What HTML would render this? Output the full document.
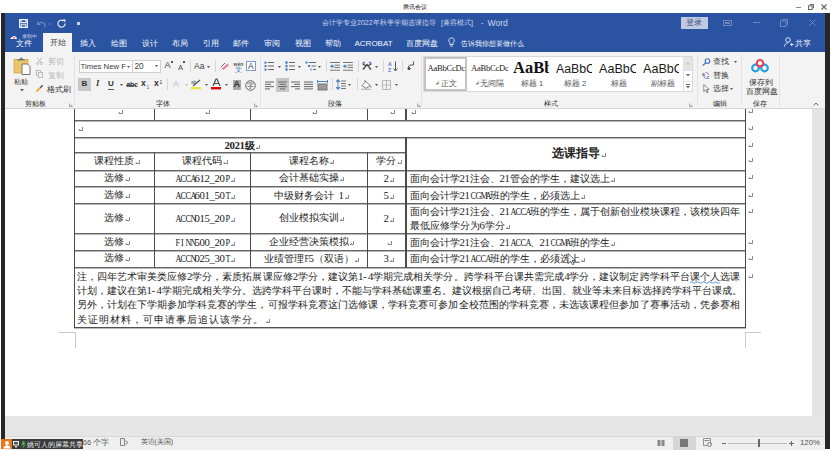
<!DOCTYPE html>
<html><head><meta charset="utf-8">
<style>
*{margin:0;padding:0;box-sizing:border-box}
html,body{width:831px;height:450px;overflow:hidden;background:#fff;font-family:"Liberation Sans",sans-serif;color:#444}
.a{position:absolute;white-space:nowrap}
#titlebar{position:absolute;left:5px;top:13px;width:820px;height:39px;background:#2a53a2}
#ribbon{position:absolute;left:5px;top:52px;width:820px;height:57px;background:#f3f3f3;border-bottom:1px solid #d6d6d6}
#doc{position:absolute;left:5px;top:109px;width:807px;height:307px;background:#fff}
#scroll{position:absolute;left:812px;top:109px;width:13px;height:307px;background:#e4e4e4}
#gray{position:absolute;left:5px;top:415.5px;width:820px;height:21px;background:#e6e6e6;border-bottom:1px solid #d8d8d8}
#status{position:absolute;left:5px;top:436.5px;width:820px;height:14px;background:#efefef}
.dk{position:absolute;top:13px;height:436px;background:#262626}
.tab{position:absolute;top:38px;font-size:8px;color:#f6f8fc;line-height:12px}
.hl{position:absolute;height:1px;background:#555}
.vl{position:absolute;width:1px;background:#555}
.d{position:absolute;white-space:nowrap;font-family:"Liberation Serif",serif;font-size:10px;color:#222;line-height:12px}
.h{display:inline-block;width:5px;text-align:center;font-family:"Liberation Serif",serif;font-size:10.8px}
.hc{transform:scaleX(0.76)}
.j{text-align:justify;text-align-last:justify;text-justify:inter-character}
.pm{display:inline-block;position:relative;width:5px;height:5px;margin-left:1px;vertical-align:-1px}
.pm::before{content:"";position:absolute;right:0.5px;top:0;width:3px;height:3px;border-right:1px solid #8a8a8a;border-bottom:1px solid #8a8a8a;border-bottom-right-radius:1.5px}
.pm::after{content:"";position:absolute;left:0;top:1.5px;width:0;height:0;border-top:1.5px solid transparent;border-bottom:1.5px solid transparent;border-right:2px solid #8a8a8a}
.rt{position:absolute;white-space:nowrap;font-size:7.6px;color:#444;line-height:9px}
.sep{position:absolute;top:55px;width:1px;height:51px;background:#e2e2e2}
.sep2{position:absolute;width:1px;height:12px;background:#d8d8d8}
.lbl{position:absolute;font-size:7.3px;color:#262626;top:99px;line-height:9px}
</style></head><body>
<!-- top bar -->
<div class="a" style="left:403px;top:3px;font-size:6px;color:#222;line-height:8px">腾讯会议</div>
<div class="a" style="left:795.5px;top:6.5px;width:5px;height:1px;background:#888"></div>
<svg class="a" style="left:808px;top:3.5px" width="6" height="6" viewBox="0 0 6 6"><rect x="0.5" y="1.8" width="3.7" height="3.7" fill="none" stroke="#666" stroke-width="1"/><path d="M1.8 0.5h3.7v3.7" fill="none" stroke="#666" stroke-width="1"/></svg>
<svg class="a" style="left:821px;top:3.5px" width="6" height="6" viewBox="0 0 6 6"><path d="M0.5 0.5l5 5M5.5 0.5l-5 5" stroke="#666" stroke-width="1.1"/></svg>

<div id="titlebar"></div>
<!-- QAT -->
<svg class="a" style="left:19px;top:19px" width="9" height="9" viewBox="0 0 9 9"><path d="M0.6 0.6h7.8v7.8h-7.8z M2 0.6v3h5v-3 M2.2 8.4v-2.6h4.6v2.6" fill="none" stroke="#f2f4fa" stroke-width="1.1"/></svg>
<svg class="a" style="left:36px;top:20px" width="16" height="8" viewBox="0 0 16 8"><path d="M1.5 1.5v3h3 M1.8 4.3c1.5-2.4 4.6-2.6 6.4-0.6c1 1.1 1 2.4 0.6 3.6" fill="none" stroke="#6f8ec8" stroke-width="1.2"/><path d="M12 3.5h3l-1.5 1.6z" fill="#6f8ec8"/></svg>
<svg class="a" style="left:57px;top:19px" width="9" height="9" viewBox="0 0 9 9"><path d="M6.6 1.9A3.5 3.5 0 1 0 8 4.5" fill="none" stroke="#f2f4fa" stroke-width="1.1"/><path d="M5.2 0.4h3.2v3.2z" fill="#f2f4fa"/></svg>
<div class="a" style="left:77px;top:22px;width:3px;height:3px;background:#c9d3ea"></div>
<div class="a" style="left:322px;top:18px;font-size:7px;color:#cdd6ee;line-height:10px">会计学专业2022年秋季学期选课指导</div>
<div class="a" style="left:441px;top:18px;font-size:7.3px;color:#cdd6ee;line-height:10px">[兼容模式]</div>
<div class="a" style="left:481px;top:18px;font-size:7.5px;color:#cdd6ee;line-height:10px">-</div>
<div class="a" style="left:487.5px;top:17.5px;font-size:8.6px;color:#cdd6ee;line-height:10px">Word</div>
<div class="a" style="left:680.5px;top:17px;width:27.5px;height:11.5px;background:#c0c9df"></div>
<div class="a" style="left:686px;top:18px;font-size:7.5px;color:#3b4f7c;line-height:10px">登录</div>
<svg class="a" style="left:723px;top:19.5px" width="9" height="6" viewBox="0 0 9 6"><rect x="0.5" y="0.5" width="8" height="5" fill="none" stroke="#7088bd" stroke-width="1"/><rect x="2" y="2" width="5" height="2" fill="#7088bd"/></svg>
<div class="a" style="left:752.5px;top:22px;width:7.5px;height:1px;background:#6f87bd"></div>
<svg class="a" style="left:779.5px;top:19px" width="8" height="8" viewBox="0 0 8 8"><rect x="0.5" y="2" width="5.5" height="5.5" fill="none" stroke="#7088bd" stroke-width="1"/><path d="M2 0.5h5.5v5.5" fill="none" stroke="#7088bd" stroke-width="1"/></svg>
<svg class="a" style="left:808.5px;top:19px" width="7" height="7" viewBox="0 0 7 7"><path d="M0.5 0.5l6 6M6.5 0.5l-6 6" stroke="#7088bd" stroke-width="1"/></svg>
<!-- tabs -->
<div class="a" style="left:43px;top:33px;width:29px;height:20px;background:#f3f3f3"></div>
<svg class="a" style="left:10px;top:35px" width="7" height="4" viewBox="0 0 7 4"><path d="M0.5 4c0-1.3 0.9-2 2-2c0.4-1.3 2.5-1.6 3.2-0.2c0.8 0.2 1.2 1.1 1.2 2.2z" fill="#fff"/><circle cx="4" cy="2.8" r="0.9" fill="#e33"/></svg>
<div class="a" style="left:22px;top:34px;font-size:4.5px;color:#d8def0;line-height:6px">录制中</div>
<div class="tab" style="left:16px;top:38px">文件</div>
<div class="tab" style="left:49.5px;top:37px;color:#444">开始</div>
<div class="tab" style="left:80px">插入</div>
<div class="tab" style="left:110.5px">绘图</div>
<div class="tab" style="left:141.5px">设计</div>
<div class="tab" style="left:172px">布局</div>
<div class="tab" style="left:202.5px">引用</div>
<div class="tab" style="left:233px">邮件</div>
<div class="tab" style="left:263.5px">审阅</div>
<div class="tab" style="left:294.5px">视图</div>
<div class="tab" style="left:325px">帮助</div>
<div class="tab" style="left:354.5px">ACROBAT</div>
<div class="tab" style="left:405.5px">百度网盘</div>
<svg class="a" style="left:448px;top:37px" width="7" height="11" viewBox="0 0 7 11"><path d="M3.5 0.8a2.7 2.7 0 0 0-1.6 4.9v1.8h3.2v-1.8a2.7 2.7 0 0 0-1.6-4.9z M2.2 9h2.6" fill="none" stroke="#e6ebf5" stroke-width="0.9"/></svg>
<div class="tab" style="left:461px;font-size:7.3px">告诉我你想要做什么</div>
<svg class="a" style="left:784px;top:37px" width="10" height="10" viewBox="0 0 10 10"><circle cx="4" cy="3" r="2.3" fill="none" stroke="#e6ebf5" stroke-width="0.9"/><path d="M0.5 9.5c0.3-2.5 1.6-3.6 3.5-3.6 M6 7.5h3.5 M7.75 5.8v3.4" fill="none" stroke="#e6ebf5" stroke-width="0.9"/></svg>
<div class="tab" style="left:795px">共享</div>
<div class="dk" style="left:1px;width:4px"></div>
<div class="dk" style="left:825px;width:5px"></div>

<div id="ribbon"></div>
<!-- clipboard group -->
<svg class="a" style="left:13px;top:56px" width="19" height="19" viewBox="0 0 19 19">
<rect x="1" y="3.5" width="14" height="13.5" fill="#e9c46a"/>
<rect x="1" y="3.5" width="14" height="13.5" fill="none" stroke="#d9a840" stroke-width="0.8"/>
<path d="M4.5 4.5v-1.6h2.2a1.5 1.5 0 0 1 3 0h2v1.6z" fill="#777"/>
<path d="M9 8h5.5l2.5 2.5v8h-8z" fill="#fff" stroke="#666" stroke-width="0.9"/>
</svg>
<div class="rt" style="left:14px;top:77px;font-size:7.3px;color:#333">粘贴</div>
<svg class="a" style="left:20px;top:89px" width="4" height="3" viewBox="0 0 4 3"><path d="M0 0h4l-2 2.5z" fill="#666"/></svg>
<svg class="a" style="left:36px;top:57px" width="7" height="8" viewBox="0 0 7 8"><path d="M1 0.5l4.5 5.5 M6 0.5l-4.5 5.5" stroke="#b4b4b4" stroke-width="0.9" fill="none"/><circle cx="1.5" cy="6.5" r="1.1" fill="none" stroke="#b4b4b4" stroke-width="0.8"/><circle cx="5.5" cy="6.5" r="1.1" fill="none" stroke="#b4b4b4" stroke-width="0.8"/></svg>
<div class="rt" style="left:47.5px;top:57px;color:#b8b8b8">剪切</div>
<svg class="a" style="left:36px;top:70px" width="7" height="8" viewBox="0 0 7 8"><rect x="0.5" y="0.5" width="4" height="5" fill="none" stroke="#b4b4b4" stroke-width="0.9"/><rect x="2.5" y="2.5" width="4" height="5" fill="#f3f3f3" stroke="#b4b4b4" stroke-width="0.9"/></svg>
<div class="rt" style="left:47.5px;top:70.5px;color:#b8b8b8">复制</div>
<svg class="a" style="left:36px;top:85px" width="7" height="7" viewBox="0 0 7 7"><path d="M0.5 6.5l3.5-3.5" stroke="#f0a020" stroke-width="1.6"/><path d="M4 3l2.5-2.5" stroke="#555" stroke-width="1.3"/><circle cx="6" cy="1" r="0.8" fill="#555"/></svg>
<div class="rt" style="left:47px;top:84.5px;color:#333">格式刷</div>
<div class="lbl" style="left:25px">剪贴板</div>
<svg class="a" style="left:68.5px;top:102.5px" width="4" height="4" viewBox="0 0 4 4"><path d="M0.5 0.5v3h3 M1.5 1.5l2 2" stroke="#888" stroke-width="0.7" fill="none"/></svg>
<div class="sep" style="left:73.5px"></div>
<!-- font group -->
<div class="a" style="left:78.5px;top:59.5px;width:54px;height:13px;background:#fff;border:1px solid #cfcfcf"></div>
<div class="a" style="left:131.5px;top:59.5px;width:29px;height:13px;background:#fff;border:1px solid #cfcfcf"></div>
<div class="rt" style="left:80.5px;top:62px;font-size:7.8px;color:#3a3a3a">Times New F</div>
<svg class="a" style="left:127px;top:65.5px" width="3" height="2" viewBox="0 0 3 2"><path d="M0 0h3l-1.5 2z" fill="#555"/></svg>
<div class="rt" style="left:134.5px;top:62px;font-size:8.2px;color:#3a3a3a">20</div>
<svg class="a" style="left:155px;top:65px" width="3" height="2" viewBox="0 0 3 2"><path d="M0 0h3l-1.5 2z" fill="#555"/></svg>
<div class="rt" style="left:164.5px;top:61px;font-size:9px;color:#444">A</div>
<div class="a" style="left:170.5px;top:61px;width:2px;height:2px;background:#555"></div>
<div class="rt" style="left:178px;top:62.5px;font-size:7.5px;color:#444">A</div>
<div class="a" style="left:183px;top:61px;width:2px;height:2px;background:#555"></div>
<div class="sep2" style="left:189.5px;top:60px"></div>
<div class="rt" style="left:194px;top:61.5px;font-size:8.5px;color:#444">Aa</div>
<svg class="a" style="left:206.5px;top:66px" width="3" height="2" viewBox="0 0 3 2"><path d="M0 0h3l-1.5 2z" fill="#555"/></svg>
<div class="sep2" style="left:214.5px;top:60px"></div>
<svg class="a" style="left:220px;top:61px" width="10" height="10" viewBox="0 0 10 10"><path d="M1 6 L5 2" stroke="#666" stroke-width="1"/><path d="M3.5 9l5.5-5-1.5-1.5-5.5 5z" fill="#e77aa0"/></svg>
<div class="rt" style="left:233.5px;top:59.5px;font-size:5px;color:#555;font-weight:bold">wén</div>
<div class="rt" style="left:235px;top:65px;font-size:6.5px;color:#3f77c0">文</div>
<div class="a" style="left:246px;top:61px;width:10px;height:10px;border:1px solid #7a9cd0;background:#fff"></div>
<div class="rt" style="left:248px;top:61.5px;font-size:8.5px;color:#333">A</div>
<div class="a" style="left:78px;top:78px;width:13px;height:13px;background:#c8c8c8"></div>
<div class="rt" style="left:81.5px;top:79px;font-size:8px;color:#333;font-weight:bold">B</div>
<div class="rt" style="left:96px;top:79px;font-size:8.5px;color:#333;font-style:italic;font-family:'Liberation Serif',serif;font-weight:bold">I</div>
<div class="rt" style="left:108px;top:78.5px;font-size:8px;color:#333;font-weight:bold">U</div>
<div class="a" style="left:108px;top:89px;width:6px;height:1px;background:#555"></div>
<svg class="a" style="left:119.5px;top:84px" width="3" height="2" viewBox="0 0 3 2"><path d="M0 0h3l-1.5 2z" fill="#555"/></svg>
<div class="rt" style="left:126.5px;top:79.5px;font-size:7px;color:#333;font-weight:bold;letter-spacing:-0.3px">abc</div>
<div class="a" style="left:126px;top:84.5px;width:10px;height:1px;background:#555"></div>
<div class="rt" style="left:141px;top:79px;font-size:8.5px;color:#333;font-weight:bold">x</div>
<div class="rt" style="left:146.5px;top:83px;font-size:5px;color:#3f77c0">1</div>
<div class="rt" style="left:154px;top:79px;font-size:8.5px;color:#333;font-weight:bold">x</div>
<div class="rt" style="left:159.5px;top:77.5px;font-size:5px;color:#333">1</div>
<div class="sep2" style="left:166.5px;top:78px"></div>
<div class="rt" style="left:172.5px;top:78.5px;font-size:9.5px;color:#d0d0d0;font-weight:bold">A</div>
<svg class="a" style="left:184.5px;top:84px" width="3" height="2" viewBox="0 0 3 2"><path d="M0 0h3l-1.5 2z" fill="#bbb"/></svg>
<svg class="a" style="left:191px;top:78px" width="11" height="12" viewBox="0 0 11 12"><path d="M2 8l7-6" stroke="#555" stroke-width="1.3"/><text x="0" y="6" font-size="5" fill="#555" font-family="Liberation Sans">ab</text><rect x="0" y="9" width="10" height="2.2" fill="#e8e830"/></svg>
<svg class="a" style="left:205px;top:84px" width="3" height="2" viewBox="0 0 3 2"><path d="M0 0h3l-1.5 2z" fill="#555"/></svg>
<svg class="a" style="left:211px;top:78px" width="11" height="12" viewBox="0 0 11 12"><path d="M2 8L5 1h1l3 7 M3.4 5.5h4.2" stroke="#444" stroke-width="1.1" fill="none"/><rect x="0" y="9" width="10" height="2.4" fill="#e00000"/></svg>
<svg class="a" style="left:225px;top:84px" width="3" height="2" viewBox="0 0 3 2"><path d="M0 0h3l-1.5 2z" fill="#555"/></svg>
<div class="a" style="left:232.5px;top:79.5px;width:8.5px;height:10px;background:#a8a8a8"></div>
<div class="rt" style="left:233.5px;top:79.5px;font-size:9px;color:#333;font-weight:bold">A</div>
<svg class="a" style="left:244.5px;top:79.5px" width="11" height="11" viewBox="0 0 11 11"><circle cx="5.5" cy="5.5" r="4.8" fill="none" stroke="#555" stroke-width="0.9"/><text x="2.3" y="8.2" font-size="6.5" fill="#444">字</text></svg>
<div class="lbl" style="left:155.5px">字体</div>
<svg class="a" style="left:254px;top:102.5px" width="4" height="4" viewBox="0 0 4 4"><path d="M0.5 0.5v3h3 M1.5 1.5l2 2" stroke="#888" stroke-width="0.7" fill="none"/></svg>
<div class="sep" style="left:259.5px"></div>
<svg class="a" style="left:264px;top:61px" width="10" height="10" viewBox="0 0 10 10"><rect x="0.5" y="0.6" width="2" height="2" fill="#3f77c0"/><rect x="4" y="1.0" width="6" height="1" fill="#666"/><rect x="0.5" y="4.1" width="2" height="2" fill="#3f77c0"/><rect x="4" y="4.5" width="6" height="1" fill="#666"/><rect x="0.5" y="7.6" width="2" height="2" fill="#3f77c0"/><rect x="4" y="8.0" width="6" height="1" fill="#666"/></svg><svg class="a" style="left:278px;top:66px" width="3" height="2" viewBox="0 0 3 2"><path d="M0 0h3l-1.5 2z" fill="#555"/></svg><svg class="a" style="left:284.5px;top:61px" width="10" height="10" viewBox="0 0 10 10"><rect x="0.5" y="0.30000000000000004" width="2" height="2.5" fill="#3f77c0"/><rect x="4" y="1.0" width="6" height="1" fill="#666"/><rect x="0.5" y="3.8" width="2" height="2.5" fill="#3f77c0"/><rect x="4" y="4.5" width="6" height="1" fill="#666"/><rect x="0.5" y="7.3" width="2" height="2.5" fill="#3f77c0"/><rect x="4" y="8.0" width="6" height="1" fill="#666"/></svg><svg class="a" style="left:298px;top:66px" width="3" height="2" viewBox="0 0 3 2"><path d="M0 0h3l-1.5 2z" fill="#555"/></svg><svg class="a" style="left:304.5px;top:61px" width="11" height="10" viewBox="0 0 11 10"><rect x="0.5" y="0.5" width="2" height="2" fill="#3f77c0"/><rect x="4" y="1" width="7" height="1" fill="#666"/><rect x="3" y="4" width="2" height="2" fill="#3f77c0"/><rect x="6.5" y="4.5" width="4.5" height="1" fill="#666"/><rect x="5.5" y="7.5" width="1" height="2" fill="#3f77c0"/><rect x="8" y="8" width="3" height="1" fill="#666"/></svg><svg class="a" style="left:317.5px;top:66px" width="3" height="2" viewBox="0 0 3 2"><path d="M0 0h3l-1.5 2z" fill="#555"/></svg><div class="sep2" style="left:325.5px;top:60px"></div><svg class="a" style="left:330px;top:61.5px" width="10" height="9" viewBox="0 0 10 9"><rect x="0" y="0" width="10" height="1" fill="#777"/><rect x="4.5" y="2.7" width="5.5" height="1" fill="#777"/><rect x="4.5" y="5" width="5.5" height="1" fill="#777"/><rect x="0" y="7.7" width="10" height="1" fill="#777"/><path d="M0 4.3l2.5-2v1.5h1.8v1h-1.8v1.5z" fill="#3f77c0"/></svg><svg class="a" style="left:343px;top:61.5px" width="10" height="9" viewBox="0 0 10 9"><rect x="0" y="0" width="10" height="1" fill="#777"/><rect x="4.5" y="2.7" width="5.5" height="1" fill="#777"/><rect x="4.5" y="5" width="5.5" height="1" fill="#777"/><rect x="0" y="7.7" width="10" height="1" fill="#777"/><path d="M4 4.3l-2.5-2v1.5h-1.5v1h1.5v1.5z" fill="#3f77c0"/></svg><div class="sep2" style="left:357.5px;top:60px"></div><svg class="a" style="left:361.5px;top:61px" width="10" height="9" viewBox="0 0 10 9"><path d="M1 8.5L5 3.5L9 8.5 M0.5 2.5l3.5 2.5 M9.5 2.5l-3.5 2.5" stroke="#444" stroke-width="1.3" fill="none"/><circle cx="2" cy="1.5" r="1" fill="#3f77c0"/><circle cx="8" cy="1.5" r="1" fill="#3f77c0"/></svg><svg class="a" style="left:374.5px;top:66px" width="3" height="2" viewBox="0 0 3 2"><path d="M0 0h3l-1.5 2z" fill="#555"/></svg><div class="sep2" style="left:382.5px;top:60px"></div><svg class="a" style="left:388px;top:60.5px" width="10" height="11" viewBox="0 0 10 11"><text x="0" y="5" font-size="5.2" fill="#3f77c0" font-family="Liberation Sans" font-weight="bold">A</text><text x="0" y="10.5" font-size="5.2" fill="#3f77c0" font-family="Liberation Sans" font-weight="bold">Z</text><path d="M7.5 0.5v9 M5.5 7.5l2 2.5 2-2.5" stroke="#555" stroke-width="1" fill="none"/></svg><div class="sep2" style="left:401.5px;top:60px"></div><svg class="a" style="left:407px;top:61px" width="8" height="10" viewBox="0 0 8 10"><path d="M6.5 0.5v3.5h-3.5 M3 4l-2 2" stroke="#555" stroke-width="1" fill="none"/><circle cx="2" cy="7.5" r="1.5" fill="#444"/></svg><svg class="a" style="left:264.5px;top:80.5px" width="10" height="9" viewBox="0 0 10 9"><rect x="0" y="0.5" width="9" height="1" fill="#666"/><rect x="0" y="2.8" width="6" height="1" fill="#666"/><rect x="0" y="5.1" width="9" height="1" fill="#666"/><rect x="0" y="7.3999999999999995" width="5" height="1" fill="#666"/></svg><div class="a" style="left:275.5px;top:78px;width:13.5px;height:13.5px;background:#c6c6c6"></div><svg class="a" style="left:277.5px;top:80.5px" width="10" height="9" viewBox="0 0 10 9"><rect x="0" y="0.5" width="9" height="1" fill="#666"/><rect x="1.5" y="2.8" width="6" height="1" fill="#666"/><rect x="0" y="5.1" width="9" height="1" fill="#666"/><rect x="2" y="7.3999999999999995" width="5" height="1" fill="#666"/></svg><svg class="a" style="left:290.5px;top:80.5px" width="10" height="9" viewBox="0 0 10 9"><rect x="0" y="0.5" width="9" height="1" fill="#666"/><rect x="3" y="2.8" width="6" height="1" fill="#666"/><rect x="0" y="5.1" width="9" height="1" fill="#666"/><rect x="4" y="7.3999999999999995" width="5" height="1" fill="#666"/></svg><svg class="a" style="left:303.5px;top:80.5px" width="10" height="9" viewBox="0 0 10 9"><rect x="0" y="0.5" width="9" height="1" fill="#666"/><rect x="0" y="2.8" width="9" height="1" fill="#666"/><rect x="0" y="5.1" width="9" height="1" fill="#666"/><rect x="0" y="7.3999999999999995" width="9" height="1" fill="#666"/></svg><svg class="a" style="left:316.5px;top:79.5px" width="11" height="11" viewBox="0 0 11 11"><path d="M0.5 0v3 M10.5 0v3 M0.5 1.5h10" stroke="#3f77c0" stroke-width="0.9" fill="none"/><rect x="0.5" y="3.5" width="10" height="7" fill="#777"/><rect x="1.5" y="4.5" width="8" height="5" fill="#999"/></svg><div class="sep2" style="left:331.5px;top:78px"></div><svg class="a" style="left:335.5px;top:79px" width="10" height="11" viewBox="0 0 10 11"><path d="M2 0.5l-1.8 2h3.6z M2 10.5l-1.8-2h3.6z M2 2v6.5" fill="#3f77c0" stroke="#3f77c0" stroke-width="0.8"/><rect x="5" y="1.5" width="5" height="1" fill="#777"/><rect x="5" y="4" width="5" height="1" fill="#777"/><rect x="5" y="6.5" width="5" height="1" fill="#777"/><rect x="5" y="9" width="5" height="1" fill="#777"/></svg><svg class="a" style="left:348px;top:84px" width="3" height="2" viewBox="0 0 3 2"><path d="M0 0h3l-1.5 2z" fill="#555"/></svg><div class="sep2" style="left:357px;top:78px"></div><svg class="a" style="left:361px;top:79px" width="11" height="11" viewBox="0 0 11 11"><path d="M1 6.5l4-4 4 4-4 3z" fill="#fff" stroke="#666" stroke-width="0.9"/><path d="M3 1.5l2 1" stroke="#666" stroke-width="0.9"/><path d="M9 6.5c0.8 1 1.2 1.8 0.6 2.3" stroke="#3f77c0" stroke-width="1" fill="none"/><rect x="0" y="9.8" width="10" height="1.2" fill="#bbb"/></svg><svg class="a" style="left:374.5px;top:84px" width="3" height="2" viewBox="0 0 3 2"><path d="M0 0h3l-1.5 2z" fill="#555"/></svg><svg class="a" style="left:382px;top:79.5px" width="9" height="10" viewBox="0 0 9 10"><path d="M0.5 0.5h8v9h-8z M4.5 0.5v9 M0.5 5h8" stroke="#aaa" stroke-width="0.8" fill="none"/></svg><svg class="a" style="left:395px;top:84px" width="3" height="2" viewBox="0 0 3 2"><path d="M0 0h3l-1.5 2z" fill="#555"/></svg><div class="lbl" style="left:328px">段落</div><svg class="a" style="left:416.5px;top:102.5px" width="4" height="4" viewBox="0 0 4 4"><path d="M0.5 0.5v3h3 M1.5 1.5l2 2" stroke="#888" stroke-width="0.7" fill="none"/></svg><div class="sep" style="left:421px"></div>

<!-- styles gallery -->
<div class="a" style="left:422.5px;top:56px;width:270px;height:36px;background:#fff;border:1px solid #d8d8d8"></div>
<div class="a" style="left:423.5px;top:57px;width:43px;height:34px;border:2px solid #c4c4c4"></div>
<div class="rt" style="left:427.5px;top:63.5px;font-family:'Liberation Serif',serif;font-size:8.6px;color:#222;letter-spacing:-0.25px">AaBbCcDc</div>
<div class="rt" style="left:434.5px;top:79px;font-size:6px;color:#555">↲</div>
<div class="rt" style="left:441px;top:79px;color:#555">正文</div>
<div class="rt" style="left:471px;top:63.5px;font-family:'Liberation Serif',serif;font-size:8.6px;color:#222;letter-spacing:-0.25px">AaBbCcDc</div>
<div class="rt" style="left:474.5px;top:79px;font-size:6px;color:#555">↲</div>
<div class="rt" style="left:480px;top:79px;color:#555">无间隔</div>
<div class="a" style="left:513px;top:58px;width:35.5px;height:20px;overflow:hidden"><div class="rt" style="left:0;top:0;font-family:'Liberation Serif',serif;font-size:16.5px;font-weight:bold;color:#111;line-height:20px">AaBb</div></div>
<div class="rt" style="left:521px;top:79px;color:#555">标题 1</div>
<div class="a" style="left:556px;top:61px;width:36px;height:16px;overflow:hidden"><div class="rt" style="left:0;top:0;font-size:12.3px;color:#1a1a1a;line-height:16px">AaBbC</div></div>
<div class="rt" style="left:564px;top:79px;color:#555">标题 2</div>
<div class="a" style="left:599px;top:60.5px;width:36.5px;height:16px;overflow:hidden"><div class="rt" style="left:0;top:0;font-size:12.6px;color:#1a1a1a;line-height:16px">AaBbC</div></div>
<div class="rt" style="left:611px;top:79px;color:#555">标题</div>
<div class="a" style="left:643px;top:60.5px;width:36px;height:16px;overflow:hidden"><div class="rt" style="left:0;top:0;font-size:12.6px;color:#1a1a1a;line-height:16px">AaBbC</div></div>
<div class="rt" style="left:650.5px;top:79px;color:#555">副标题</div>
<div class="a" style="left:682.5px;top:57px;width:1px;height:34px;background:#e0e0e0"></div>
<div class="a" style="left:683.5px;top:57px;width:8.5px;height:12.5px;background:#e4e4e4"></div>
<svg class="a" style="left:686px;top:62px" width="4" height="3" viewBox="0 0 4 3"><path d="M0 2.5h4l-2-2.5z" fill="#c0c0c0"/></svg>
<div class="a" style="left:683.5px;top:69.5px;width:8.5px;height:1px;background:#e0e0e0"></div>
<svg class="a" style="left:686px;top:74px" width="4" height="3" viewBox="0 0 4 3"><path d="M0 0h4l-2 2.5z" fill="#666"/></svg>
<div class="a" style="left:683.5px;top:80.5px;width:8.5px;height:1px;background:#e0e0e0"></div>
<div class="a" style="left:686px;top:84px;width:4px;height:1px;background:#666"></div>
<svg class="a" style="left:686px;top:86px" width="4" height="3" viewBox="0 0 4 3"><path d="M0 0h4l-2 2.5z" fill="#666"/></svg>
<div class="lbl" style="left:544px">样式</div>
<svg class="a" style="left:688.5px;top:102.5px" width="4" height="4" viewBox="0 0 4 4"><path d="M0.5 0.5v3h3 M1.5 1.5l2 2" stroke="#888" stroke-width="0.7" fill="none"/></svg>
<div class="sep" style="left:696.5px"></div>
<!-- editing -->
<svg class="a" style="left:702px;top:57.5px" width="9" height="8" viewBox="0 0 9 8"><circle cx="5.5" cy="3" r="2.3" fill="none" stroke="#3f77c0" stroke-width="1.1"/><path d="M3.8 4.7L0.8 7.5" stroke="#3f77c0" stroke-width="1.4"/></svg>
<div class="rt" style="left:712.5px;top:57px;color:#333">查找</div>
<svg class="a" style="left:733.5px;top:61px" width="3" height="2" viewBox="0 0 3 2"><path d="M0 0h3l-1.5 2z" fill="#555"/></svg>
<svg class="a" style="left:702px;top:71px" width="10" height="8" viewBox="0 0 10 8"><text x="0" y="4.5" font-size="5" fill="#666" font-family="Liberation Sans" font-weight="bold">a</text><text x="4.5" y="8" font-size="5" fill="#3f77c0" font-family="Liberation Sans" font-weight="bold">c</text><path d="M3.5 1.5c2 0 3 1 3 2.5 M2 5c0 1.5 1 2.5 2.5 2.5" stroke="#9b59b6" stroke-width="0.8" fill="none"/></svg>
<div class="rt" style="left:712.5px;top:70.5px;color:#333">替换</div>
<svg class="a" style="left:703px;top:84px" width="7" height="9" viewBox="0 0 7 9"><path d="M0.8 0.5v7l1.8-1.6 1.4 3 1.1-0.5-1.4-2.9h2.5z" fill="#fff" stroke="#666" stroke-width="0.8"/></svg>
<div class="rt" style="left:712.5px;top:84px;color:#333">选择</div>
<svg class="a" style="left:730px;top:88px" width="3" height="2" viewBox="0 0 3 2"><path d="M0 0h3l-1.5 2z" fill="#555"/></svg>
<div class="lbl" style="left:712.5px">编辑</div>
<div class="sep" style="left:741px"></div>
<!-- save -->
<svg class="a" style="left:751px;top:58.5px" width="18" height="14" viewBox="0 0 18 14"><circle cx="4.5" cy="9" r="3.3" fill="none" stroke="#1fa0e0" stroke-width="2.2"/><circle cx="13.5" cy="9" r="3.3" fill="none" stroke="#1fa0e0" stroke-width="2.2"/><circle cx="9" cy="4.2" r="3.2" fill="none" stroke="#e8455a" stroke-width="2.2"/><circle cx="9" cy="4.2" r="1.3" fill="#fff"/></svg>
<div class="rt" style="left:748.5px;top:77.5px;color:#333">保存到</div>
<div class="rt" style="left:745.5px;top:86.5px;color:#333">百度网盘</div>
<div class="lbl" style="left:752.5px">保存</div>
<div class="sep" style="left:778.5px"></div>
<svg class="a" style="left:813px;top:102px" width="6" height="4" viewBox="0 0 6 4"><path d="M0.5 3.5L3 1l2.5 2.5" stroke="#666" stroke-width="1" fill="none"/></svg>
<div id="doc"></div>
<!--DOC-->
<div class="a" style="left:74px;top:120px;width:672px;height:1px;background:#656565;box-shadow:0 1px 0 #b8b8b8"></div>
<div class="a" style="left:74px;top:137px;width:672px;height:1px;background:#656565;box-shadow:0 1px 0 #b8b8b8"></div>
<div class="a" style="left:74px;top:152px;width:331px;height:1px;background:#656565;box-shadow:0 1px 0 #b8b8b8"></div>
<div class="a" style="left:74px;top:170px;width:672px;height:1px;background:#656565;box-shadow:0 1px 0 #b8b8b8"></div>
<div class="a" style="left:74px;top:186px;width:672px;height:1px;background:#656565;box-shadow:0 1px 0 #b8b8b8"></div>
<div class="a" style="left:74px;top:203px;width:672px;height:1px;background:#656565;box-shadow:0 1px 0 #b8b8b8"></div>
<div class="a" style="left:74px;top:233px;width:672px;height:1px;background:#656565;box-shadow:0 1px 0 #b8b8b8"></div>
<div class="a" style="left:74px;top:250px;width:672px;height:1px;background:#656565;box-shadow:0 1px 0 #b8b8b8"></div>
<div class="a" style="left:74px;top:267px;width:672px;height:1px;background:#656565;box-shadow:0 1px 0 #b8b8b8"></div>
<div class="a" style="left:74px;top:327px;width:672px;height:1px;background:#505050;box-shadow:0 1px 0 #b8b8b8"></div>
<div class="a" style="left:74px;top:109px;width:1px;height:219px;background:#4a4a4a"></div>
<div class="a" style="left:745px;top:109px;width:1px;height:219px;background:#4a4a4a"></div>
<div class="a" style="left:154px;top:109px;width:1px;height:11px;background:#4a4a4a"></div>
<div class="a" style="left:154px;top:152px;width:1px;height:116px;background:#4a4a4a"></div>
<div class="a" style="left:250px;top:109px;width:1px;height:11px;background:#4a4a4a"></div>
<div class="a" style="left:250px;top:152px;width:1px;height:116px;background:#4a4a4a"></div>
<div class="a" style="left:367px;top:109px;width:1px;height:11px;background:#4a4a4a"></div>
<div class="a" style="left:367px;top:152px;width:1px;height:116px;background:#4a4a4a"></div>
<div class="a" style="left:405px;top:109px;width:2px;height:11px;background:#4a4a4a"></div>
<div class="a" style="left:405px;top:137px;width:2px;height:131px;background:#4a4a4a"></div>
<span class="pm" style="position:absolute;left:117px;top:110px"></span>
<span class="pm" style="position:absolute;left:204px;top:110px"></span>
<span class="pm" style="position:absolute;left:311px;top:110px"></span>
<span class="pm" style="position:absolute;left:389px;top:110px"></span>
<span class="pm" style="position:absolute;left:410px;top:110px"></span>
<span class="pm" style="position:absolute;left:77px;top:127px"></span>
<div class="d" style="left:77px;top:139px;width:331px;text-align:center;font-weight:bold;"><span class="h">2</span><span class="h">0</span><span class="h">2</span><span class="h">1</span>级<span class="pm"></span></div>
<div class="d" style="left:410px;top:147px;width:338px;text-align:center;font-weight:bold;font-size:12px;">选课指导<span class="pm"></span></div>
<div class="d" style="left:77px;top:155px;width:80px;text-align:center;">课程性质<span class="pm"></span></div>
<div class="d" style="left:157px;top:155px;width:96px;text-align:center;">课程代码<span class="pm"></span></div>
<div class="d" style="left:253px;top:155px;width:117px;text-align:center;">课程名称<span class="pm"></span></div>
<div class="d" style="left:370px;top:155px;width:38px;text-align:center;">学分<span class="pm"></span></div>
<div class="d" style="left:77px;top:172px;width:80px;text-align:center;">选修<span class="pm"></span></div>
<div class="d" style="left:157px;top:172px;width:96px;text-align:center;"><span class="h hc">A</span><span class="h hc">C</span><span class="h hc">C</span><span class="h hc">A</span><span class="h">6</span><span class="h">1</span><span class="h">2</span><span class="h">_</span><span class="h">2</span><span class="h">0</span><span class="h hc">P</span><span class="pm"></span></div>
<div class="d" style="left:253px;top:172px;width:117px;text-align:center;">会计基础实操<span class="pm"></span></div>
<div class="d" style="left:370px;top:172px;width:38px;text-align:center;"><span class="h">2</span><span class="pm"></span></div>
<div class="d" style="left:409.5px;top:172px;">面向会计学<span class="h">2</span><span class="h">1</span>注会、<span class="h">2</span><span class="h">1</span>管会的学生，建议选上<span class="pm"></span></div>
<div class="d" style="left:77px;top:189px;width:80px;text-align:center;">选修<span class="pm"></span></div>
<div class="d" style="left:157px;top:189px;width:96px;text-align:center;"><span class="h hc">A</span><span class="h hc">C</span><span class="h hc">C</span><span class="h hc">A</span><span class="h">6</span><span class="h">0</span><span class="h">1</span><span class="h">_</span><span class="h">5</span><span class="h">0</span><span class="h hc">T</span><span class="pm"></span></div>
<div class="d" style="left:253px;top:189px;width:117px;text-align:center;">中级财务会计<span class="h"> </span><span class="h">1</span><span class="pm"></span></div>
<div class="d" style="left:370px;top:189px;width:38px;text-align:center;"><span class="h">5</span><span class="pm"></span></div>
<div class="d" style="left:409.5px;top:189px;">面向会计学<span class="h">2</span><span class="h">1</span><span class="h hc">C</span><span class="h hc">G</span><span class="h hc">M</span><span class="h hc">A</span>班的学生，必须选上<span class="pm"></span></div>
<div class="d" style="left:77px;top:212px;width:80px;text-align:center;">选修<span class="pm"></span></div>
<div class="d" style="left:157px;top:212px;width:96px;text-align:center;"><span class="h hc">A</span><span class="h hc">C</span><span class="h hc">C</span><span class="h hc">N</span><span class="h">0</span><span class="h">1</span><span class="h">5</span><span class="h">_</span><span class="h">2</span><span class="h">0</span><span class="h hc">P</span><span class="pm"></span></div>
<div class="d" style="left:253px;top:212px;width:117px;text-align:center;">创业模拟实训<span class="pm"></span></div>
<div class="d" style="left:370px;top:212px;width:38px;text-align:center;"><span class="h">2</span><span class="pm"></span></div>
<div class="d" style="left:409.5px;top:205px;">面向会计学<span class="h">2</span><span class="h">1</span>注会、<span class="h">2</span><span class="h">1</span><span class="h hc">A</span><span class="h hc">C</span><span class="h hc">C</span><span class="h hc">A</span>班的学生，属于创新创业模块课程，该模块四年</div>
<div class="d" style="left:409.5px;top:219px;">最低应修学分为<span class="h">6</span>学分<span class="pm"></span></div>
<div class="d" style="left:77px;top:236px;width:80px;text-align:center;">选修<span class="pm"></span></div>
<div class="d" style="left:157px;top:236px;width:96px;text-align:center;"><span class="h hc">F</span><span class="h hc">I</span><span class="h hc">N</span><span class="h hc">N</span><span class="h">5</span><span class="h">0</span><span class="h">0</span><span class="h">_</span><span class="h">2</span><span class="h">0</span><span class="h hc">P</span><span class="pm"></span></div>
<div class="d" style="left:253px;top:236px;width:117px;text-align:center;">企业经营决策模拟<span class="pm"></span></div>
<div class="d" style="left:370px;top:236px;width:38px;text-align:center;"><span class="pm"></span></div>
<div class="d" style="left:409.5px;top:236px;">面向会计学<span class="h">2</span><span class="h">1</span>注会、<span class="h">2</span><span class="h">1</span><span class="h hc">A</span><span class="h hc">C</span><span class="h hc">C</span><span class="h hc">A</span>、<span class="h">2</span><span class="h">1</span><span class="h hc">C</span><span class="h hc">G</span><span class="h hc">M</span><span class="h hc">A</span>班的学生<span class="pm"></span></div>
<div class="d" style="left:77px;top:252px;width:80px;text-align:center;">选修<span class="pm"></span></div>
<div class="d" style="left:157px;top:252px;width:96px;text-align:center;"><span class="h hc">A</span><span class="h hc">C</span><span class="h hc">C</span><span class="h hc">N</span><span class="h">0</span><span class="h">2</span><span class="h">5</span><span class="h">_</span><span class="h">3</span><span class="h">0</span><span class="h hc">T</span><span class="pm"></span></div>
<div class="d" style="left:253px;top:252px;width:117px;text-align:center;">业绩管理<span class="h hc">F</span><span class="h">5</span>（双语）<span class="pm"></span></div>
<div class="d" style="left:370px;top:252px;width:38px;text-align:center;"><span class="h">3</span><span class="pm"></span></div>
<div class="d" style="left:409.5px;top:252px;">面向会计学<span class="h">2</span><span class="h">1</span><span class="h hc">A</span><span class="h hc">C</span><span class="h hc">C</span><span class="h hc">A</span>班的学生，必须选上<span class="pm"></span></div>
<div class="d j" style="left:76.5px;top:269.5px;width:663.5px">注，四年艺术审美类应修<span class="h">2</span>学分，素质拓展课应修<span class="h">2</span>学分，建议第<span class="h">1</span><span class="h">-</span><span class="h">4</span>学期完成相关学分。跨学科平台课共需完成<span class="h">4</span>学分，建议制定跨学科平台课个人选课</div>
<div class="d j" style="left:76.5px;top:284px;width:663.5px">计划，建议在第<span class="h">1</span><span class="h">-</span><span class="h">4</span>学期完成相关学分。选跨学科平台课时，不能与学科基础课重名。建议根据自己考研、出国、就业等未来目标选择跨学科平台课成。</div>
<div class="d j" style="left:76.5px;top:298.5px;width:663.5px">另外，计划在下学期参加学科竞赛的学生，可报学科竞赛这门选修课，学科竞赛可参加全校范围的学科竞赛，未选该课程但参加了赛事活动，凭参赛相</div>
<div class="d" style="left:76.5px;top:314px;letter-spacing:1.06px;">关证明材料，可申请事后追认该学分。<span class="pm"></span></div>
<span class="pm" style="position:absolute;left:747px;top:109px"></span>
<span class="pm" style="position:absolute;left:747px;top:126px"></span>
<span class="pm" style="position:absolute;left:747px;top:143px"></span>
<span class="pm" style="position:absolute;left:747px;top:158px"></span>
<span class="pm" style="position:absolute;left:747px;top:175px"></span>
<span class="pm" style="position:absolute;left:747px;top:193px"></span>
<span class="pm" style="position:absolute;left:747px;top:209px"></span>
<span class="pm" style="position:absolute;left:747px;top:240px"></span>
<span class="pm" style="position:absolute;left:747px;top:256px"></span>
<span class="pm" style="position:absolute;left:747px;top:274px"></span>
<svg class="a" style="left:690px;top:281px" width="31" height="3" viewBox="0 0 31 3"><path d="M0 1.5q1.5-1.5 3 0t3 0 3 0 3 0 3 0 3 0 3 0 3 0 3 0 3 0" stroke="#3f77c0" stroke-width="0.8" fill="none"/></svg>
<div class="a" style="left:58px;top:332px;width:18px;height:1px;background:#c8c8c8"></div>
<div class="a" style="left:75px;top:332px;width:1px;height:16px;background:#c8c8c8"></div>
<div class="a" style="left:745px;top:332px;width:16px;height:1px;background:#c8c8c8"></div>
<div class="a" style="left:745px;top:332px;width:1px;height:16px;background:#c8c8c8"></div>
<svg class="a" style="left:567px;top:253px" width="10" height="12" viewBox="0 0 10 12"><path d="M1 0.5v10l2.5-2.3 2 3.5 1.5-0.8-2-3.4h3.5z" fill="#fff" stroke="#444" stroke-width="0.8"/></svg>
<!--/DOC-->
<div id="scroll"></div>
<div id="gray"></div>
<div id="status"></div>
<div class="rt" style="left:78.5px;top:437.5px;font-size:7.6px;color:#555">566 个字</div>
<svg class="a" style="left:120px;top:438px" width="9" height="8" viewBox="0 0 9 8"><path d="M0.5 0.5h4v7h-4z" fill="none" stroke="#777" stroke-width="0.9"/><path d="M5.5 2.5l2.5 2-2.5 2" fill="none" stroke="#777" stroke-width="0.9"/></svg>
<div class="rt" style="left:140.5px;top:437.5px;font-size:7.1px;color:#555">英语(美国)</div>
<svg class="a" style="left:657px;top:438.5px" width="8" height="8" viewBox="0 0 8 8"><path d="M0.5 1h3v6h-3z M4.5 1h3v6h-3z" fill="#888"/></svg>
<div class="a" style="left:673px;top:436px;width:23px;height:14px;background:#d6d6d6"></div>
<div class="a" style="left:680px;top:438.5px;width:8px;height:8px;background:#777"></div>
<svg class="a" style="left:703px;top:438px" width="9" height="9" viewBox="0 0 9 9"><path d="M0.5 0.5h7v6" fill="none" stroke="#888" stroke-width="0.9"/><path d="M0.5 0.5v7h4" fill="none" stroke="#888" stroke-width="0.9"/><circle cx="6.5" cy="6.5" r="2" fill="none" stroke="#777" stroke-width="0.9"/><rect x="1.5" y="2" width="5" height="1" fill="#888"/></svg>
<div class="a" style="left:721.5px;top:442.5px;width:4px;height:1px;background:#666"></div>
<div class="a" style="left:728px;top:442.5px;width:59px;height:1px;background:#bdbdbd"></div>
<div class="a" style="left:757.5px;top:439px;width:2px;height:8px;background:#666"></div>
<div class="a" style="left:789px;top:442.5px;width:5px;height:1px;background:#666"></div>
<div class="a" style="left:791px;top:440.5px;width:1px;height:5px;background:#666"></div>
<div class="rt" style="left:800px;top:437.5px;font-size:7.8px;color:#555">120%</div>
<!-- meeting overlay -->
<div class="a" style="left:1px;top:438.5px;width:11px;height:10px;background:#e8781e"></div>
<svg class="a" style="left:2.5px;top:439.5px" width="8" height="9" viewBox="0 0 8 9"><circle cx="4" cy="3" r="2" fill="#fff"/><path d="M0.5 8.5c0.3-2.4 1.6-3.2 3.5-3.2s3.2 0.8 3.5 3.2z" fill="#fff"/></svg>
<div class="a" style="left:12px;top:439px;width:71px;height:9.5px;background:#3a3a3a"></div>
<svg class="a" style="left:13px;top:440.5px" width="6" height="7" viewBox="0 0 6 7"><rect x="0" y="0" width="6" height="4.5" fill="#f0f0f0"/><rect x="1" y="1" width="4" height="2.5" fill="#555"/><rect x="2" y="5" width="2" height="1.5" fill="#ddd"/></svg>
<svg class="a" style="left:21px;top:440.5px" width="5" height="7" viewBox="0 0 5 7"><rect x="1.3" y="0.3" width="2.4" height="4" rx="1.2" fill="#4cc04c"/><path d="M0.5 3.5c0 1.3 0.9 2 2 2s2-0.7 2-2 M2.5 5.5v1.2" stroke="#4cc04c" stroke-width="0.7" fill="none"/></svg>
<div class="rt" style="left:27px;top:440px;font-size:6.9px;color:#f0f0f0;line-height:10px">姚可人的屏幕共享</div>
</body></html>
